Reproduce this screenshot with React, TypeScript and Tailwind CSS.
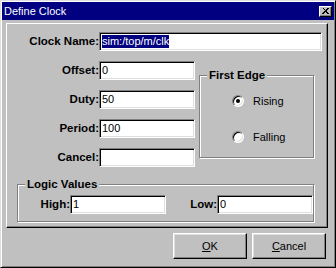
import React from "react";

const font = "font-['Liberation_Sans',Arial,sans-serif]";

const sunken =
  "border border-t-[#808080] border-l-[#808080] border-r-white border-b-white shadow-[inset_1px_1px_0_#000,inset_-1px_-1px_0_#dfdfdf] bg-white";

const Field = ({ value, w, selected }: { value: string; w: string; selected?: boolean }) => (
  <div className={`${sunken} ${w} h-[19px] flex items-center pl-[2px] text-[11px] text-black`}>
    {selected ? (
      <span className="bg-[#000080] text-white leading-[13px]">{value}</span>
    ) : (
      <span className="leading-[13px]">{value}</span>
    )}
  </div>
);

const Row = ({ label, value }: { label: string; value: string }) => (
  <div className="flex items-center h-[19px]">
    <span className="w-[92px] text-right font-bold text-[11.5px] text-black">{label}</span>
    <Field value={value} w="w-[96px]" />
  </div>
);

const Radio = ({ label, checked }: { label: string; checked?: boolean }) => (
  <div className="flex items-center h-[16px] pl-[32px]">
    <div className="w-[12px] h-[12px] rounded-full border border-t-[#808080] border-l-[#808080] border-r-white border-b-white bg-white shadow-[inset_1px_1px_0_#000,inset_-1px_-1px_0_#dfdfdf] flex items-center justify-center">
      {checked && <div className="w-[4px] h-[4px] rounded-full bg-black" />}
    </div>
    <span className="ml-[9px] text-[11px] text-black">{label}</span>
  </div>
);

const Button = ({ first, rest }: { first: string; rest: string }) => (
  <button className="w-[74px] h-[26px] bg-[#c0c0c0] border border-t-white border-l-white border-r-black border-b-black shadow-[inset_-1px_-1px_0_#808080,inset_1px_1px_0_#dfdfdf] text-[11px] text-black flex items-center justify-center">
    <span className="underline underline-offset-[1px]">{first}</span>
    <span>{rest}</span>
  </button>
);

export default function App() {
  return (
    <div
      className={`${font} w-[336px] h-[268px] bg-[#c0c0c0] border border-t-[#dfdfdf] border-l-[#dfdfdf] border-r-black border-b-black shadow-[inset_1px_1px_0_#fff,inset_-1px_-1px_0_#808080] p-px`}
    >
      {/* title bar */}
      <div className="h-[18px] bg-[#000080] flex items-center justify-between pl-[2px] pr-[2px]">
        <span className="text-white text-[11px] leading-[13px]">Define Clock</span>
        <div className="w-[13px] h-[11px] bg-[#c0c0c0] border border-t-white border-l-white border-r-black border-b-black shadow-[inset_-1px_-1px_0_#808080] flex items-center justify-center">
          <svg width="7" height="6" viewBox="0 0 7 6">
            <path d="M0 0h2v1h1v1h1V1h1V0h2v1H6v1H5v1H4v0h1v1h1v1h1v1H5V5H4V4H3v1H2v1H0V5h1V4h1V3h1V2H2V1H1V0z" fill="#000" />
            <rect x="3" y="2" width="1" height="2" fill="#000" />
          </svg>
        </div>
      </div>

      <div className="ml-[4px] mt-[3px] w-[322px]">
        {/* main panel */}
        <div className="h-[205px] border border-t-white border-l-white border-r-black border-b-black shadow-[inset_-1px_-1px_0_#808080] flex flex-col">
          <div className="flex items-center h-[19px] mt-[8px]">
            <span className="w-[92px] text-right font-bold text-[11.5px] text-black">Clock Name:</span>
            <Field value="sim:/top/m/clk" w="w-[223px]" selected />
          </div>

          <div className="flex mt-[10px]">
            <div className="flex flex-col gap-[10px]">
              <Row label="Offset:" value="0" />
              <Row label="Duty:" value="50" />
              <Row label="Period:" value="100" />
              <Row label="Cancel:" value="" />
            </div>
            <fieldset className="ml-[4px] mt-[8px] w-[115px] h-[89px] border border-[#808080] shadow-[inset_1px_1px_0_#fff,1px_1px_0_#fff]">
              <legend className="ml-[7px] px-[2px] bg-[#c0c0c0] font-bold text-[11.5px] leading-[13px] text-black">
                First Edge
              </legend>
              <div className="pt-[11px] flex flex-col gap-[20px]">
                <Radio label="Rising" checked />
                <Radio label="Falling" />
              </div>
            </fieldset>
          </div>

          <fieldset className="ml-[10px] mt-[11px] w-[297px] border border-[#808080] shadow-[inset_1px_1px_0_#fff,1px_1px_0_#fff] pt-[4px] pb-[7px]">
            <legend className="ml-[7px] px-[2px] bg-[#c0c0c0] font-bold text-[11.5px] leading-[13px] text-black">
              Logic Values
            </legend>
            <div className="flex items-center h-[19px]">
              <span className="w-[52px] text-right font-bold text-[11.5px] text-black">High:</span>
              <Field value="1" w="w-[96px]" />
              <span className="w-[51px] text-right font-bold text-[11.5px] text-black">Low:</span>
              <Field value="0" w="w-[96px]" />
            </div>
          </fieldset>
        </div>

        {/* buttons */}
        <div className="flex justify-end gap-[5px] mt-[5px] pr-[2px]">
          <Button first="O" rest="K" />
          <Button first="C" rest="ancel" />
        </div>
      </div>
    </div>
  );
}
